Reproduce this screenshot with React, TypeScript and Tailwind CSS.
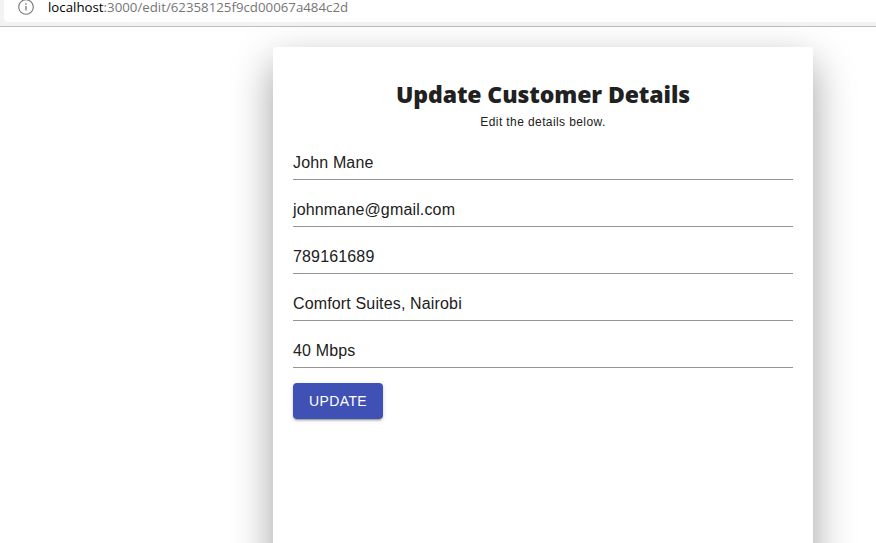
const fields = ["John Mane", "johnmane@gmail.com", "789161689", "Comfort Suites, Nairobi", "40 Mbps"];

export default function App() {
  return (
    <div className="h-[543px] w-[876px] overflow-hidden bg-white font-['Liberation_Sans',Arial,sans-serif]">
      <header className="h-[27px] border-b border-[#bdbdbd] bg-[#f3f3f3] pl-1">
        <div className="flex h-[22px] items-start rounded-bl-[4px] bg-white pl-[14px]">
          <svg className="-mt-px h-4 w-4 shrink-0" viewBox="0 0 16 16" fill="none" stroke="#777" strokeWidth="1.1">
            <circle cx="8" cy="8" r="7.3" />
            <path d="M8 7v4.6M8 4.3v1.4" strokeWidth="1.3" />
          </svg>
          <span className="ml-[14px] whitespace-nowrap font-['Open_Sans',sans-serif] text-[13.28px] leading-[14px] text-[#767676]">
            <span className="text-black">localhost</span>:3000/edit/62358125f9cd00067a484c2d
          </span>
        </div>
      </header>
      <main className="ml-[273px] mt-5 h-[600px] w-[540px] rounded-[4px] bg-white px-5 pt-[29px] shadow-[0_16px_40px_rgba(0,0,0,0.38)]">
        <h1 className="text-center font-['Open_Sans',sans-serif] text-[23px] font-extrabold leading-9 tracking-[-0.1px] text-[#212121]">
          Update Customer Details
        </h1>
        <p className="mt-px text-center text-xs leading-[18px] tracking-[0.4px] text-[#212121]">Edit the details below.</p>
        <form className="mt-[17px]">
          {fields.map((value) => (
            <div key={value} className="mb-[15px] h-8 border-b border-[#949494] pt-[5px] text-base leading-[19px] tracking-[0.15px] text-[#212121]">
              {value}
            </div>
          ))}
          <button type="button" className="h-9 w-[90px] rounded-[4px] bg-[#3f51b5] text-sm tracking-[0.4px] text-white shadow-[0_3px_1px_-2px_rgba(0,0,0,0.2),0_2px_2px_rgba(0,0,0,0.14),0_1px_5px_rgba(0,0,0,0.12)]">
            UPDATE
          </button>
        </form>
      </main>
    </div>
  );
}
